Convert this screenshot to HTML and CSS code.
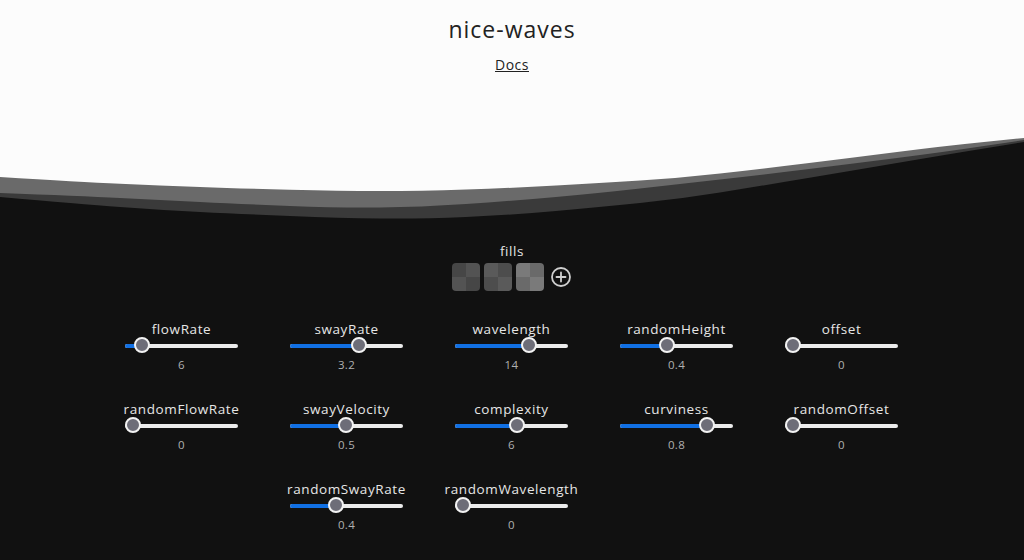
FILE: index.html
```html
<!DOCTYPE html>
<html>
<head>
<meta charset="utf-8">
<title>nice-waves</title>
<link rel="stylesheet" href="styles.css">
</head>
<body>
<header class="hero">
  <h1 class="title">nice-waves</h1>
  <a class="docs" href="#">Docs</a>
</header>
<svg class="wave" viewBox="0 0 1024 100" preserveAspectRatio="none" width="1024" height="100">
  <rect x="0" y="0" width="1024" height="100" fill="#111111"/>
  <path fill="#3a3a3a" d="M0,0 V67 Q80,74 120,77 Q160,80 200,82 Q240,84 290,86 Q340,88 380,88.5 Q420,89 466,87 Q512,85 556,81 Q600,77 640,73 Q680,69 720,62.5 Q760,56 805,48.5 Q850,41 897,33 Q944,25 984,18.5 L1024,12 V0 Z"/>
  <path fill="#6a6a6a" d="M0,0 V63 Q80,66 120,68 Q160,70 200,72 Q240,74 290,76 Q340,78 380,77.5 Q420,77 466,74 Q512,71 556,67 Q600,63 640,58.5 Q680,54 720,49.5 Q760,45 805,39.5 Q850,34 897,28 Q944,22 984,16 L1024,10 V0 Z"/>
  <path fill="#fcfcfc" d="M0,0 V47 Q80,52 120,53.75 Q160,55.5 200,57 Q240,58.5 290,59.75 Q340,61 380,61 Q420,61 466,59.5 Q512,58 556,55.5 Q600,53 640,50.5 Q680,48 720,43.5 Q760,39 805,33.5 Q850,28 897,22 Q944,16 984,12 L1024,8 V0 Z"/>
</svg>
<main class="panel">
  <section class="fills">
    <div class="fills-label">fills</div>
    <div class="swatches">
      <div class="swatch s1"><i></i><i></i><i></i><i></i></div>
      <div class="swatch s2"><i></i><i></i><i></i><i></i></div>
      <div class="swatch s3"><i></i><i></i><i></i><i></i></div>
      <svg class="add" width="22" height="22" viewBox="0 0 22 22">
        <circle cx="11" cy="11" r="9" fill="none" stroke="#cfcfcf" stroke-width="1.8"/>
        <path d="M11 6.5 V15.5 M6.5 11 H15.5" stroke="#cfcfcf" stroke-width="1.8" stroke-linecap="round"/>
      </svg>
    </div>
  </section>
  <section class="controls">
    <div class="ctl"><div class="lbl">flowRate</div><div class="slider"><div class="track"><div class="fill" style="width:16px"></div><div class="thumb" style="left:9px"></div></div></div><div class="val">6</div></div>
    <div class="ctl"><div class="lbl">swayRate</div><div class="slider"><div class="track"><div class="fill" style="width:68px"></div><div class="thumb" style="left:61px"></div></div></div><div class="val">3.2</div></div>
    <div class="ctl"><div class="lbl">wavelength</div><div class="slider"><div class="track"><div class="fill" style="width:73px"></div><div class="thumb" style="left:66px"></div></div></div><div class="val">14</div></div>
    <div class="ctl"><div class="lbl">randomHeight</div><div class="slider"><div class="track"><div class="fill" style="width:46px"></div><div class="thumb" style="left:39px"></div></div></div><div class="val">0.4</div></div>
    <div class="ctl"><div class="lbl">offset</div><div class="slider"><div class="track"><div class="fill" style="width:0px"></div><div class="thumb" style="left:0px"></div></div></div><div class="val">0</div></div>

    <div class="ctl"><div class="lbl">randomFlowRate</div><div class="slider"><div class="track"><div class="fill" style="width:0px"></div><div class="thumb" style="left:0px"></div></div></div><div class="val">0</div></div>
    <div class="ctl"><div class="lbl">swayVelocity</div><div class="slider"><div class="track"><div class="fill" style="width:55px"></div><div class="thumb" style="left:48px"></div></div></div><div class="val">0.5</div></div>
    <div class="ctl"><div class="lbl">complexity</div><div class="slider"><div class="track"><div class="fill" style="width:61px"></div><div class="thumb" style="left:54px"></div></div></div><div class="val">6</div></div>
    <div class="ctl"><div class="lbl">curviness</div><div class="slider"><div class="track"><div class="fill" style="width:86px"></div><div class="thumb" style="left:79px"></div></div></div><div class="val">0.8</div></div>
    <div class="ctl"><div class="lbl">randomOffset</div><div class="slider"><div class="track"><div class="fill" style="width:0px"></div><div class="thumb" style="left:0px"></div></div></div><div class="val">0</div></div>

    <div class="ctl col2"><div class="lbl">randomSwayRate</div><div class="slider"><div class="track"><div class="fill" style="width:45px"></div><div class="thumb" style="left:38px"></div></div></div><div class="val">0.4</div></div>
    <div class="ctl"><div class="lbl">randomWavelength</div><div class="slider"><div class="track"><div class="fill" style="width:0px"></div><div class="thumb" style="left:0px"></div></div></div><div class="val">0</div></div>
  </section>
</main>
</body>
</html>
```
FILE: styles.css
```css
html, body {
  margin: 0;
  padding: 0;
}
body {
  background: #111111;
  font-family: "Open Sans", "DejaVu Sans", sans-serif;
  width: 1024px;
  overflow: hidden;
}
.hero {
  background: #fcfcfc;
  height: 130px;
  display: flex;
  flex-direction: column;
  align-items: center;
  padding-top: 15px;
  box-sizing: border-box;
}
.title {
  margin: 0;
  font-weight: 400;
  font-size: 23px;
  line-height: 28px;
  letter-spacing: 1px;
  color: #222;
}
.docs {
  margin-top: 13px;
  font-size: 14px;
  line-height: 18px;
  letter-spacing: 0.5px;
  color: #222;
  text-decoration: underline;
}
.wave {
  display: block;
}
.panel {
  display: flex;
  flex-direction: column;
  align-items: center;
  padding-top: 12px;
}
.fills {
  display: flex;
  flex-direction: column;
  align-items: center;
}
.fills-label {
  font-size: 13.5px;
  line-height: 18px;
  letter-spacing: 0.6px;
  color: #e4e4e4;
}
.swatches {
  margin-top: 3px;
  display: flex;
  align-items: center;
  gap: 4px;
}
.swatch {
  width: 28px;
  height: 28px;
  border-radius: 4px;
  overflow: hidden;
  display: grid;
  grid-template-columns: 1fr 1fr;
  grid-template-rows: 1fr 1fr;
}
.s1 i:nth-child(1), .s1 i:nth-child(4) { background: #464646; }
.s1 i:nth-child(2), .s1 i:nth-child(3) { background: #535353; }
.s2 i:nth-child(1), .s2 i:nth-child(4) { background: #5a5a5a; }
.s2 i:nth-child(2), .s2 i:nth-child(3) { background: #4d4d4d; }
.s3 i:nth-child(1), .s3 i:nth-child(4) { background: #7a7a7a; }
.s3 i:nth-child(2), .s3 i:nth-child(3) { background: #6a6a6a; }
.add {
  margin-left: 2px;
}
.controls {
  margin-top: 29px;
  display: grid;
  grid-template-columns: repeat(5, 165px);
  row-gap: 27px;
  margin-left: -1px;
}
.ctl {
  display: flex;
  flex-direction: column;
  align-items: center;
}
.col2 {
  grid-column-start: 2;
}
.lbl {
  font-size: 13.5px;
  line-height: 18px;
  letter-spacing: 0.6px;
  color: #e6e6e6;
}
.slider {
  height: 16px;
  display: flex;
  align-items: center;
}
.track {
  position: relative;
  width: 113px;
  height: 4px;
  border-radius: 2px;
  background: #ececec;
}
.fill {
  height: 4px;
  border-radius: 2px;
  background: #1170e4;
}
.thumb {
  position: absolute;
  top: -7px;
  width: 12px;
  height: 12px;
  border-radius: 50%;
  background: #6d6d78;
  border: 2px solid #f2f2f2;
  box-sizing: content-box;
}
.val {
  margin-top: 3px;
  font-size: 11.5px;
  line-height: 16px;
  letter-spacing: 0.3px;
  color: #b0b0b0;
}
```
